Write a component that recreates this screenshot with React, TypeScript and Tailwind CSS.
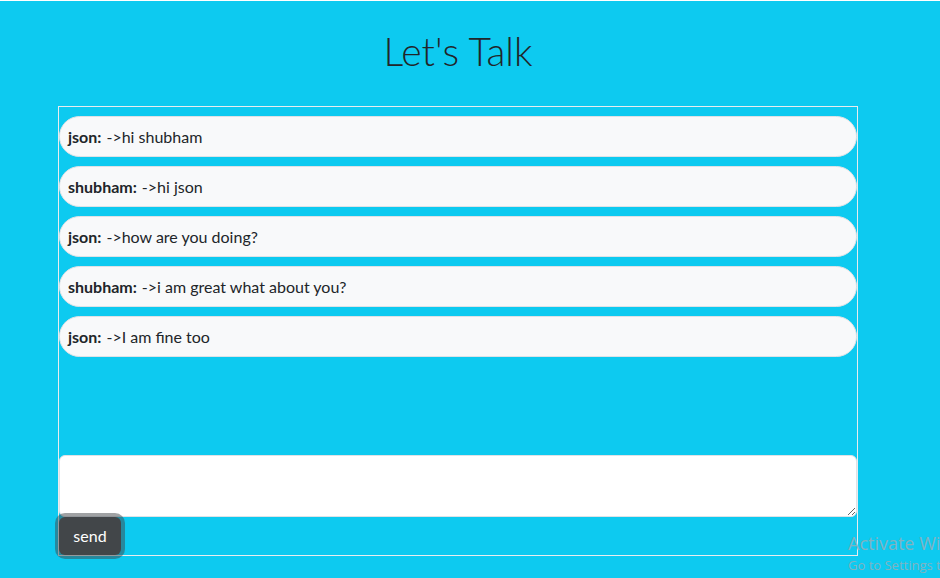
const messages = [
  { from: "json", text: "hi shubham" },
  { from: "shubham", text: "hi json" },
  { from: "json", text: "how are you doing?" },
  { from: "shubham", text: "i am great what about you?" },
  { from: "json", text: "I am fine too" },
];

export default function App() {
  return (
    <div className="relative h-[578px] w-[940px] overflow-hidden border-t border-white bg-[#0dcaf0] font-['Lato',sans-serif] text-[16px] text-[#212529]">
      <div className="ml-[58px] w-[800px]">
        <h1 className="pt-[26px] text-center text-[39px] leading-[48px] font-light">Let's Talk</h1>

        {/* chat box */}
        <div className="mt-[31px] flex h-[450px] flex-col border border-[#e9ecef]">
          <div className="flex flex-col gap-[9px] pt-[9px]">
            {messages.map((m, i) => (
              <div
                key={i}
                className="flex h-[41px] items-center rounded-full border border-[#dee2e6] bg-[#f8f9fa] px-[8px]"
              >
                <b className="font-bold">{m.from}:</b>
                <span className="ml-[5px]">{"->"}{m.text}</span>
              </div>
            ))}
          </div>

          <div className="mt-auto">
            <textarea className="block h-[62px] w-full resize-y rounded-[6px] border border-[#dee2e6] bg-white outline-none" />
            <button className="h-[38px] w-[62px] rounded-[6px] bg-[#424649] text-white shadow-[0_0_0_4px_rgba(66,70,73,0.5)]">
              send
            </button>
          </div>
        </div>
      </div>

      {/* windows watermark */}
      <div className="absolute left-[848px] top-[530px] whitespace-nowrap font-['Open_Sans',sans-serif] text-[#7fb3c2]">
        <div className="text-[18px] leading-[24px]">Activate Windows</div>
        <div className="text-[13px] leading-[20px]">Go to Settings to activate Windows.</div>
      </div>
    </div>
  );
}
